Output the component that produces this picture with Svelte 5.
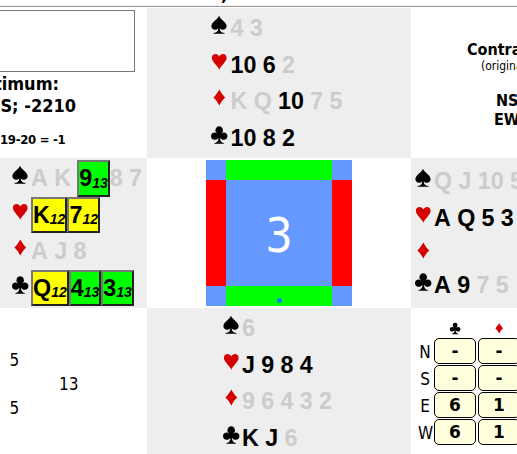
<script lang="ts">
    type Card = { r: string; off?: boolean; box?: string; n?: string };

    // a trailing "-" marks a card that has already been played
    const parse = (s: string): Card[] =>
        s.split(" ").filter(Boolean).map((t) => {
            const [rank, box, n] = t.split(":");
            const off = rank.endsWith("-");
            return { r: off ? rank.slice(0, -1) : rank, off, box, n };
        });

    const suits = ["spade", "heart", "diamond", "club"];

    const hands: Record<string, Card[][]> = {
        north: ["4- 3-", "10 6 2-", "K- Q- 10 7- 5-", "10 8 2"].map(parse),
        west: ["A- K- 9:green:13 8- 7-", "K:yellow:12 7:yellow:12", "A- J- 8-", "Q:yellow:12 4:green:13 3:green:13"].map(parse),
        east: ["Q- J- 10- 5-", "A Q 5 3", "", "A 9 7- 5-"].map(parse),
        south: ["6-", "J 9 8 4", "9- 6- 4- 3- 2-", "K J 6-"].map(parse),
    };

    const makes = [
        { seat: "N", tricks: ["-", "-"] },
        { seat: "S", tricks: ["-", "-"] },
        { seat: "E", tricks: ["6", "1"] },
        { seat: "W", tricks: ["6", "1"] },
    ];
</script>

{#snippet icon(suit: string)}
    <svg class="suit {suit}" viewBox="0 0 18 20">
        {#if suit == "spade"}
            <path d="M9 .8C8 4 1.400 7.300 1.400 11.300c0 3.700 4.800 4.600 6.800 1.900 0 2.400-.9 4.200-4.700 4.900v.7h11v-.7c-3.800-.7-4.700-2.500-4.700-4.900 2 2.700 6.800 1.800 6.800-1.900C16.600 7.300 10 4 9 .8z" />
        {:else if suit == "heart"}
            <path d="M9.300 18C8.700 14.200 1.900 10.200 1.900 5.700c0-4.600 6-5 7.400-1.100 1.400-3.900 7.300-3.500 7.300 1.100 0 4.500-6.700 8.500-7.300 12.300z" />
        {:else if suit == "diamond"}
            <path d="M9.300 1.500C11 4.800 12.800 7.200 15.200 9.500c-2.400 2.300-4.200 4.700-5.900 8-1.700-3.300-3.500-5.700-5.900-8 2.400-2.300 4.200-4.700 5.900-8z" />
        {:else}
            <path d="M9.200 1.200a3.800 3.800 0 0 0-2.900 6.200l1 1.300C5.200 6.500 1 7.500 1 11.200c0 4.300 5.800 4.500 7.400 1.500 0 3-1 4.800-4.100 5.500v.6h9.800v-.6c-3.100-.7-4.100-2.500-4.100-5.500 1.600 3 7.400 2.800 7.400-1.500 0-3.700-4.200-4.700-6.300-2.500l1-1.300a3.800 3.800 0 0 0-2.900-6.200z" />
        {/if}
    </svg>
{/snippet}

{#snippet hand(seat: string)}
    <div class="hand {seat}">
        {#each hands[seat] as cards, i}
            <div class="row" class:empty={!cards.length}>
                {@render icon(suits[i])}
                {#each cards as card}
                    {#if card.box}
                        <span class="card box {card.box}">{card.r}<i>{card.n}</i></span>
                    {:else}
                        <span class="card" class:off={card.off}>{card.r}</span>
                    {/if}
                {/each}
            </div>
        {/each}
    </div>
{/snippet}

<div class="page">
    <div class="title"><span>,</span></div>
    <div class="table">
        <div class="info">
            <div class="panel"></div>
            <div class="optimum">timum:</div>
            <div class="score">S; -2210</div>
            <div class="imps">19-20 = -1</div>
        </div>
        {@render hand("north")}
        <div class="contract">
            <b>Contra</b>
            <small>(origina</small>
            <b class="ns">NS</b>
            <b class="ew">EW</b>
        </div>

        {@render hand("west")}
        <div class="centre">
            <div class="board">
                <div class="corner"></div>
                <div class="vul ns"></div>
                <div class="corner"></div>
                <div class="vul ew"></div>
                <div class="number">3</div>
                <div class="vul ew"></div>
                <div class="corner"></div>
                <div class="vul ns"><span class="dealer"></span></div>
                <div class="corner"></div>
            </div>
        </div>
        {@render hand("east")}

        <div class="points">
            <span class="n">5</span>
            <span class="e">13</span>
            <span class="s">5</span>
        </div>
        {@render hand("south")}
        <div class="makes">
            <span></span>
            <span class="head">{@render icon("club")}</span>
            <span class="head">{@render icon("diamond")}</span>
            {#each makes as m}
                <span class="seat">{m.seat}</span>
                {#each m.tricks as t}
                    <span class="tricks">{t}</span>
                {/each}
            {/each}
        </div>
    </div>
</div>

<style>
    :global(body) {
        margin: 0;
        background: #fff;
    }

    .page {
        width: 517px;
        height: 454px;
        overflow: hidden;
        font-family: "DejaVu Sans Condensed", "DejaVu Sans", sans-serif;
        color: #000;
    }

    .title {
        box-sizing: border-box;
        height: 8px;
        padding-left: 221px;
        border-bottom: 1px solid #fff;
        box-shadow: inset 0 -1px #999, inset 0 -2px #eee;
        overflow: hidden;
        font: bold 18px "DejaVu Sans", sans-serif;
    }

    .title span {
        display: block;
        margin-top: -16px;
        line-height: 20px;
    }

    .table {
        display: grid;
        grid-template-columns: 147px 264px 120px;
        grid-template-rows: 150px 150px 150px;
    }

    .info {
        white-space: nowrap;
        font-weight: bold;
    }

    .panel {
        box-sizing: border-box;
        width: 135px;
        height: 62px;
        margin: 2px 0 1px;
        border: 1px solid #777;
        border-left: 0;
    }

    .optimum,
    .score {
        width: 59px;
        height: 22px;
        line-height: 22px;
        font-size: 18px;
        display: flex;
        justify-content: flex-end;
    }

    .score {
        width: 76px;
    }

    .imps {
        padding-top: 15px;
        font-size: 13px;
        line-height: 16px;
        letter-spacing: -0.3px;
    }

    .contract {
        display: flex;
        flex-direction: column;
        padding: 32px 0 0 56px;
        white-space: nowrap;
        font-size: 16px;
        line-height: 19px;
    }

    .contract small {
        padding-left: 14px;
        font-size: 12px;
        line-height: 14px;
    }

    .contract .ns {
        padding: 18px 0 0 29px;
    }

    .contract .ew {
        padding-left: 27px;
    }

    .hand {
        background: #eee;
        overflow: hidden;
        font: bold 23.3px/36px "Liberation Sans", Arial, sans-serif;
    }

    .north {
        padding: 2px 0 0 62px;
    }

    .west {
        padding: 2px 0 0 10px;
    }

    .west .suit {
        margin-right: 2px;
    }

    .east {
        padding: 5px 0 0 1.5px;
    }

    .south {
        padding: 2px 0 0 73.5px;
    }

    .row {
        display: flex;
        height: 36.5px;
        white-space: nowrap;
    }

    .row.empty {
        height: 30.5px;
    }

    .suit {
        flex: none;
        width: 18px;
        height: 20px;
        margin: 5px 2.5px 0 1px;
    }

    .heart,
    .diamond {
        fill: #d40000;
    }

    .card {
        margin-right: 6.3px;
    }

    .off {
        color: #ccc;
    }

    .box {
        box-sizing: border-box;
        height: 36.5px;
        margin-right: 0;
        border: 2px solid;
        border-color: #777 #222 #222 #777;
        line-height: 32px;
    }

    .box i {
        display: inline-block;
        font-size: 14px;
        line-height: 14px;
        vertical-align: -1.5px;
    }

    .yellow {
        background: #ff0;
    }

    .green {
        background: #0f0;
    }

    .centre {
        display: flex;
        align-items: center;
        justify-content: center;
    }

    .board {
        display: grid;
        grid-template-columns: 20px 106px 20px;
        grid-template-rows: 20px 106px 20px;
        background: #69f;
    }

    .vul.ns {
        display: flex;
        align-items: flex-end;
        justify-content: center;
        background: #0f0;
    }

    .vul.ew {
        background: #f00;
    }

    .number {
        color: #fff;
        font-size: 48px;
        line-height: 110px;
        text-align: center;
    }

    .dealer {
        width: 5px;
        height: 5px;
        margin-bottom: 3px;
        border-radius: 50%;
        background: #0080ff;
    }

    .points {
        display: grid;
        grid-template-columns: 59px 88px;
        grid-template-rows: 24px 24px 24px;
        padding-top: 40px;
        font-size: 17px;
        line-height: 24px;
    }

    .points .n,
    .points .s {
        padding-left: 9.5px;
    }

    .points .e {
        grid-area: 2 / 2;
    }

    .points .s {
        grid-row: 3;
    }

    .makes {
        display: grid;
        grid-template-columns: 21px 42px 42px;
        grid-template-rows: 16px repeat(4, 26px);
        column-gap: 2px;
        row-gap: 1px;
        padding-top: 13px;
        text-align: center;
        font-size: 17px;
        line-height: 28px;
    }

    .head .suit {
        display: block;
        width: 12px;
        height: 13px;
        margin: 1px auto 0;
    }

    .seat {
        padding-left: 7px;
    }

    .tricks {
        box-sizing: border-box;
        border: 1.5px solid #000;
        border-radius: 5px;
        background: #ffffdd;
        font: bold 17px/25px "DejaVu Sans", sans-serif;
    }
</style>
